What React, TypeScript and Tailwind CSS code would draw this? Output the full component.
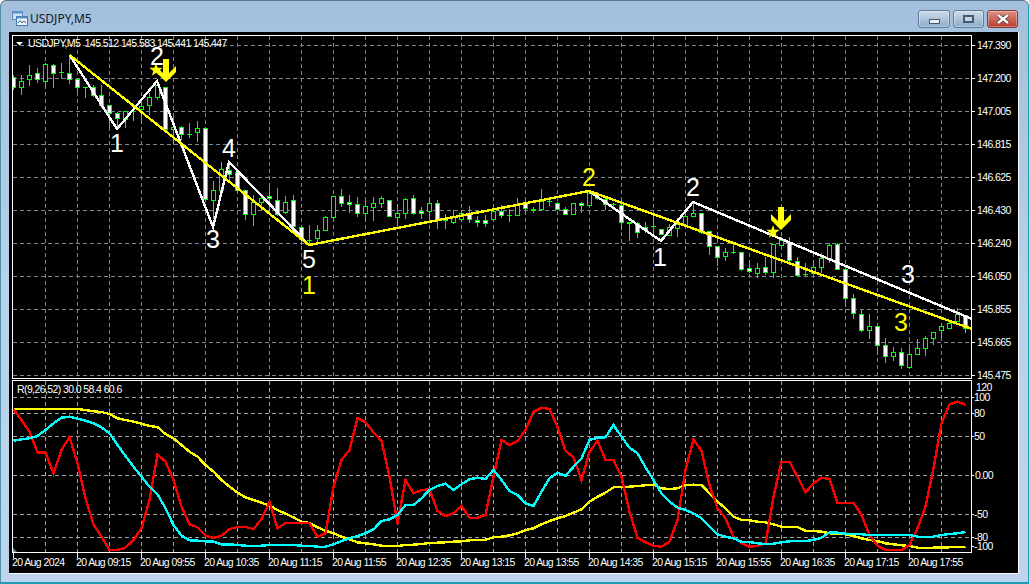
import React from 'react';

// hi, body top, body bottom, lo, 1 = bearish (white body)
const candles: number[][] = [
  [75,77,87,90,1],[75,81,87,95,0],[65,75,79,86,0],[68,73,79,83,1],[63,64,81,88,0],[64,65,73,88,1],[63,72,72,79,1],[55,73,79,84,1],
  [79,79,87,92,1],[87,87,87,98,1],[85,87,95,97,1],[85,95,105,108,1],[105,105,113,128,1],[112,113,118,130,1],[111,111,119,128,0],[104,111,111,121,1],
  [103,106,109,122,0],[93,97,105,115,0],[82,85,97,100,0],[87,87,129,130,1],[115,127,129,144,0],[126,127,134,140,1],[123,134,134,138,1],[121,128,132,142,0],
  [128,128,199,202,1],[181,190,200,219,0],[162,169,190,195,0],[163,170,174,180,1],[170,172,190,192,1],[190,190,214,220,1],[195,202,214,226,0],[195,198,202,210,0],
  [185,196,198,215,1],[188,200,214,216,1],[196,202,212,214,0],[195,200,226,228,1],[227,227,239,245,1],[225,240,240,245,1],[225,230,238,245,0],[216,217,230,231,0],
  [196,196,217,220,0],[189,196,203,207,1],[195,202,204,213,1],[197,204,213,217,1],[200,206,213,220,0],[197,203,207,221,0],[196,198,203,208,0],[200,200,216,216,1],
  [205,213,217,225,0],[198,199,213,219,0],[195,198,213,215,1],[207,211,213,219,1],[198,203,211,219,0],[200,203,220,229,1],[214,220,220,229,1],[210,217,222,224,0],
  [211,213,219,222,0],[206,214,219,223,1],[216,220,222,227,1],[215,220,223,227,1],[209,211,219,220,0],[205,211,215,218,1],[209,215,215,222,1],[198,204,215,215,0],
  [200,203,208,214,1],[207,209,210,213,1],[189,201,209,211,0],[199,201,201,206,1],[202,203,209,210,1],[207,209,214,215,1],[203,203,214,215,0],[202,203,205,213,1],
  [191,193,205,207,0],[192,197,198,200,0],[197,199,204,210,1],[203,204,204,210,1],[203,205,222,230,1],[222,222,223,241,1],[222,223,232,238,1],[222,227,229,233,1],
  [215,226,226,237,1],[229,229,234,235,1],[224,227,235,236,0],[218,224,228,237,0],[213,216,225,228,0],[202,213,216,216,0],[213,213,232,234,1],[231,231,246,255,1],
  [246,246,257,266,1],[248,252,256,261,0],[244,252,252,254,1],[252,252,269,271,1],[262,268,271,273,1],[263,268,273,278,0],[257,267,272,275,1],[244,244,272,278,0],
  [237,240,245,247,0],[237,242,260,262,1],[257,261,275,275,1],[263,274,274,277,1],[262,267,273,275,0],[253,258,267,273,0],[243,245,258,263,0],[243,244,269,270,1],
  [269,269,298,307,1],[294,298,313,319,1],[310,314,330,332,1],[314,326,330,339,0],[326,326,345,355,1],[338,345,356,363,1],[347,352,356,361,0],[348,352,365,369,1],
  [347,354,367,367,0],[339,348,354,355,0],[336,338,348,356,0],[332,332,338,345,0],[323,326,330,338,0],[320,323,328,329,0],[308,314,321,322,0],[315,315,328,333,1],
];

const red = [409.3,420,431.7,452.3,452.3,473.3,450,437,463.3,498.3,524.3,536.7,550,550,547.7,540,528.3,500,454.7,461.7,480,506.7,524.3,527.3,535.7,538,535.7,529,527,527,529,519,502,528.3,523,522.7,522.7,523.3,536.7,533.3,486.7,460,450,418.3,422.3,432.3,441,476.7,523.3,480,493.3,490,489.3,511,516,513.3,506,517.7,517.7,515,476.7,440,445,441,430,411.7,407.7,409,426.7,450.7,457.3,480,451.7,440.7,460,460,476.7,511.7,537.7,542.3,545.7,546.7,541.7,520,470,439.3,451,485,508.3,518.3,536.7,543.3,546.7,545.7,543.3,496.7,461.7,461.7,476.7,492.3,483.3,477.7,479,502.7,502.7,502.7,515,535,545.7,549.7,550,550,545,528.3,506.7,468.3,423.3,404.3,401.7,405];
const cyan = [440.7,439.3,438.3,436,430,423.3,417.7,416.7,418.7,420.7,423.3,427.3,433.3,445,456,466.7,476.7,486.7,494.3,508.3,525,535.7,540.3,540.7,541.3,541.7,544.3,544.3,545,545.7,545.7,545.7,545,545,545,545,545.7,545.7,546.7,546.7,544.3,541,538.3,536,533.3,529.3,521,519.3,515,505,505,498.3,490,486,483.7,490,484.3,479.3,477.7,479,470,480,491,495,503.3,506,491.7,478.3,472.7,476,466.7,458.3,440,437.7,437.3,425,436.7,447.7,453.3,467.3,480,493.3,501.7,507.7,510,513.3,518.3,526.7,534.3,536.7,538.3,541.7,542,543.3,544,543.7,542.3,541.3,541,541,540,537.7,532.3,532.7,533.7,534,534.3,535,535,535,535,535,535,536.7,536.7,536.7,535,534,533.3,532];
const yellow = [409,409,409,409,409,409,409,409,409,410,411.3,412,414,418.3,420,421.7,423.7,426,427,434,438.3,445,451.7,456.7,465,471.7,480,486.7,492.7,497.3,500,502.7,505.7,510,513.7,517.3,521.7,523,527.3,530.7,533.3,536.7,539.3,542.3,543.3,544.3,545.7,546,546,545,544.7,544,543,542.7,542.3,541.7,541.3,540.3,540,539.7,537.3,536.7,535.3,533.3,530,528.3,524.3,521,518.3,516,512.7,509.3,501.7,496.7,492.7,487.3,487,486.7,486,485.3,484.7,488.3,489,488.3,485,484.7,485,493.3,501.7,508.3,516.7,520,520.3,521.7,522.3,524.3,526.7,526.7,527,530.7,531,531.7,533.3,533.7,534.3,536,538.3,540,541,543.3,544.3,545.3,546,547.7,547.7,547.7,547.5,547.3,547,546.7];

const priceLabels = ['147.390','147.200','147.005','146.815','146.625','146.430','146.240','146.050','145.855','145.665','145.475'];
const indicatorLevels = [
  { y: 397.5, label: '100', x: 974 },
  { y: 413.5, label: '80', x: 974 },
  { y: 436.5, label: '50', x: 974 },
  { y: 475.5, label: '0.00', x: 975 },
  { y: 514.5, label: '-50', x: 974 },
  { y: 537.5, label: '-80', x: 974 },
];
const times = ['20 Aug 2024','20 Aug 09:15','20 Aug 09:55','20 Aug 10:35','20 Aug 11:15','20 Aug 11:55','20 Aug 12:35','20 Aug 13:15','20 Aug 13:55','20 Aug 14:35','20 Aug 15:15','20 Aug 15:55','20 Aug 16:35','20 Aug 17:15','20 Aug 17:55'];
const vGrid = Array.from({ length: 29 }, (_, i) => 45.5 + i * 32);

const digits = [
  { t: '1', x: 117, y: 152, c: '#fff' },
  { t: '2', x: 157, y: 65, c: '#fff' },
  { t: '3', x: 213, y: 248, c: '#fff' },
  { t: '4', x: 229, y: 157, c: '#fff' },
  { t: '5', x: 309, y: 268, c: '#fff' },
  { t: '1', x: 309, y: 294, c: '#ffff00' },
  { t: '2', x: 589, y: 186, c: '#ffff00' },
  { t: '1', x: 660, y: 266, c: '#fff' },
  { t: '2', x: 693, y: 196, c: '#fff' },
  { t: '3', x: 908, y: 283, c: '#fff' },
  { t: '3', x: 901, y: 331, c: '#ffff00' },
];

const toPoints = (ys: number[]) => ys.map((y, i) => `${13.5 + i * 8},${y}`).join(' ');

const starPoints = Array.from({ length: 10 }, (_, i) => {
  const r = i % 2 === 0 ? 7 : 2.8;
  const a = (Math.PI / 5) * i - Math.PI / 2;
  return `${(r * Math.cos(a)).toFixed(1)},${(r * Math.sin(a)).toFixed(1)}`;
}).join(' ');

function Arrow({ x, y }: { x: number; y: number }) {
  return (
    <g transform={`translate(${x} ${y})`} fill="#ffff00">
      <path d="M-3 -23H3V-9L10 -16V-10L0 0L-10 -10V-16L-3 -9Z" />
    </g>
  );
}

function Star({ x, y }: { x: number; y: number }) {
  return <polygon transform={`translate(${x} ${y})`} points={starPoints} fill="#ffff00" />;
}

function Candle({ c, i }: { c: number[]; i: number }) {
  const [hi, top, bot, lo, bear] = c;
  const x = 13 + i * 8;
  return (
    <g shapeRendering="crispEdges">
      <rect x={x} y={hi} width={1} height={lo - hi} fill="#00ff00" />
      {top === bot ? (
        <rect x={x - 2} y={top} width={5} height={1} fill="#00ff00" />
      ) : (
        <rect x={x - 1.5} y={top + 0.5} width={4} height={bot - top} fill={bear ? '#ffffff' : '#000000'} stroke="#00ff00" />
      )}
    </g>
  );
}

function Chart() {
  return (
    <svg viewBox="9 32 1009 541" className="block w-[1009px] h-[541px] font-['Liberation_Sans',sans-serif]">
      <defs>
        <clipPath id="main"><rect x="13" y="36" width="958" height="343" /></clipPath>
        <clipPath id="ind"><rect x="13" y="381" width="958" height="172" /></clipPath>
      </defs>

      {/* grid */}
      <g stroke="#778899" strokeDasharray="4 3" shapeRendering="crispEdges">
        {priceLabels.map((_, i) => <line key={i} x1="13" x2="971" y1={45.5 + i * 33} y2={45.5 + i * 33} />)}
        {vGrid.map(x => <line key={x} x1={x} x2={x} y1="36" y2="379" />)}
      </g>
      <g stroke="#a0a0a0" strokeDasharray="4 3" shapeRendering="crispEdges">
        {indicatorLevels.map(l => <line key={l.label} x1="13" x2="971" y1={l.y} y2={l.y} />)}
        {vGrid.map(x => <line key={x} x1={x} x2={x} y1="381" y2="553" />)}
      </g>

      {/* candles and waves */}
      <g clipPath="url(#main)">
        {candles.map((c, i) => <Candle key={i} c={c} i={i} />)}
        <g fill="none" strokeWidth="2.4" shapeRendering="crispEdges">
          <polyline points="69.5,55 117,129 157,81 213,227 229,162 308,244" stroke="#ffffff" />
          <polyline points="589,191 661,241 693,202 972,319" stroke="#ffffff" />
          <polyline points="69.5,55 309,245 589,191 972,329" stroke="#ffff00" />
        </g>
        <Star x={156} y={70} />
        <Star x={773} y={232} />
        <Arrow x={166} y={82} />
        <Arrow x={781} y={230} />
      </g>

      {/* indicator */}
      <g clipPath="url(#ind)" fill="none" strokeWidth="2.4" shapeRendering="crispEdges">
        <polyline points={toPoints(yellow)} stroke="#ffff00" />
        <polyline points={toPoints(red)} stroke="#ff0000" />
        <polyline points={toPoints(cyan)} stroke="#00ffff" />
      </g>
      <polygon points="13,548 18,553 13,553" fill="#778899" />

      {/* frames */}
      <g fill="none" stroke="#ffffff" shapeRendering="crispEdges">
        <rect x="12.5" y="35.5" width="959" height="343" />
        <rect x="12.5" y="380.5" width="959" height="172" />
        {priceLabels.map((_, i) => <line key={i} x1="971" x2="975" y1={45.5 + i * 33} y2={45.5 + i * 33} />)}
        {[...indicatorLevels.map(l => l.y), 546.5].map(y => <line key={y} x1="971" x2="974" y1={y} y2={y} />)}
        {times.map((_, i) => <line key={i} x1={13.5 + i * 64} x2={13.5 + i * 64} y1="553" y2="558" />)}
      </g>

      {/* captions */}
      <g fill="#ffffff" className="text-[10.5px] tracking-[-0.6px]">
        <polygon points="16,42 23,42 19.5,45.5" />
        <text x="28" y="47">USDJPY,M5&#160;&#160;145.512 145.583 145.441 145.447</text>
        <text x="17" y="393">R(9,26,52) 30.0 58.4 60.6</text>
        {priceLabels.map((p, i) => <text key={p} x="977" y={49 + i * 33}>{p}</text>)}
        <text x="976" y="391">120</text>
        {indicatorLevels.map(l => <text key={l.label} x={l.x} y={l.y + 3.5}>{l.label}</text>)}
        <text x="974" y="550">-100</text>
        {times.map((t, i) => <text key={t} x={12 + i * 64} y="566">{t}</text>)}
      </g>

      {/* wave numbers */}
      <g className="text-[25px]" textAnchor="middle">
        {digits.map((d, i) => <text key={i} x={d.x} y={d.y} fill={d.c}>{d.t}</text>)}
      </g>
    </svg>
  );
}

function WindowIcon() {
  return (
    <svg viewBox="0 0 16 16" className="w-4 h-4 mr-[2px]">
      <rect x="0.5" y="0.5" width="10" height="8" fill="#cfe3f6" stroke="#5d8fc4" />
      <rect x="0.5" y="0.5" width="10" height="2" fill="#5d8fc4" />
      <rect x="4.5" y="5.5" width="11" height="9" fill="#eef6fd" stroke="#3f78b5" />
      <rect x="4.5" y="5.5" width="11" height="2" fill="#5d8fc4" />
      <path d="M6 12L8 9.5L10 12L12 10L14 12" fill="none" stroke="#2d5f9a" />
    </svg>
  );
}

function WinButton({ children, className }: { children: React.ReactNode; className: string }) {
  return (
    <div className={`h-[18px] flex items-center justify-center rounded-[3px] border border-[#5d7c9f] shadow-[inset_0_0_0_1px_rgba(255,255,255,0.35)] ${className}`}>
      {children}
    </div>
  );
}

export default function App() {
  return (
    <div className="w-[1029px] h-[584px] flex flex-col overflow-hidden bg-white">
      <div className="flex-1 flex flex-col rounded-t-[6px] border border-[#5f7488] border-b-[#1f9bb3] border-b-2 border-r-[#1f9bb3] border-l-[#4f8fa8] bg-gradient-to-b from-[#a4bfdb] via-[#b9d1ea] to-[#bdd4ec] pb-[7px]">
        <div className="h-[31px] pt-[5px] flex items-center pl-[11px] pr-[10px]">
          <WindowIcon />
          <span className="text-[12px] text-[#0b1a33] font-['Noto_Sans',sans-serif]">USDJPY,M5</span>
          <div className="ml-auto flex gap-[3px]">
            <WinButton className="w-[32px] bg-gradient-to-b from-[#cfdcea] to-[#8dabcb]">
              <div className="w-[11px] h-[5px] bg-[#e8eef5] border border-[#46586c] mt-[5px]" />
            </WinButton>
            <WinButton className="w-[31px] bg-gradient-to-b from-[#cfdcea] to-[#8dabcb]">
              <div className="w-[11px] h-[8px] bg-[#c4d4e6] border-2 border-[#46586c]" />
            </WinButton>
            <WinButton className="w-[31px] bg-gradient-to-b from-[#dc8f84] to-[#b8392b] border-[#7d3a35]">
              <svg viewBox="0 0 14 10" className="w-[14px] h-[10px]">
                <path d="M2 1L12 9M12 1L2 9" stroke="#3f2a2a" strokeWidth="3.6" />
                <path d="M2 1L12 9M12 1L2 9" stroke="#ffffff" strokeWidth="2.4" />
              </svg>
            </WinButton>
          </div>
        </div>
        <div className="mx-[8px] bg-black border-r border-b border-white w-[1010px] h-[542px]">
          <Chart />
        </div>
      </div>
    </div>
  );
}
